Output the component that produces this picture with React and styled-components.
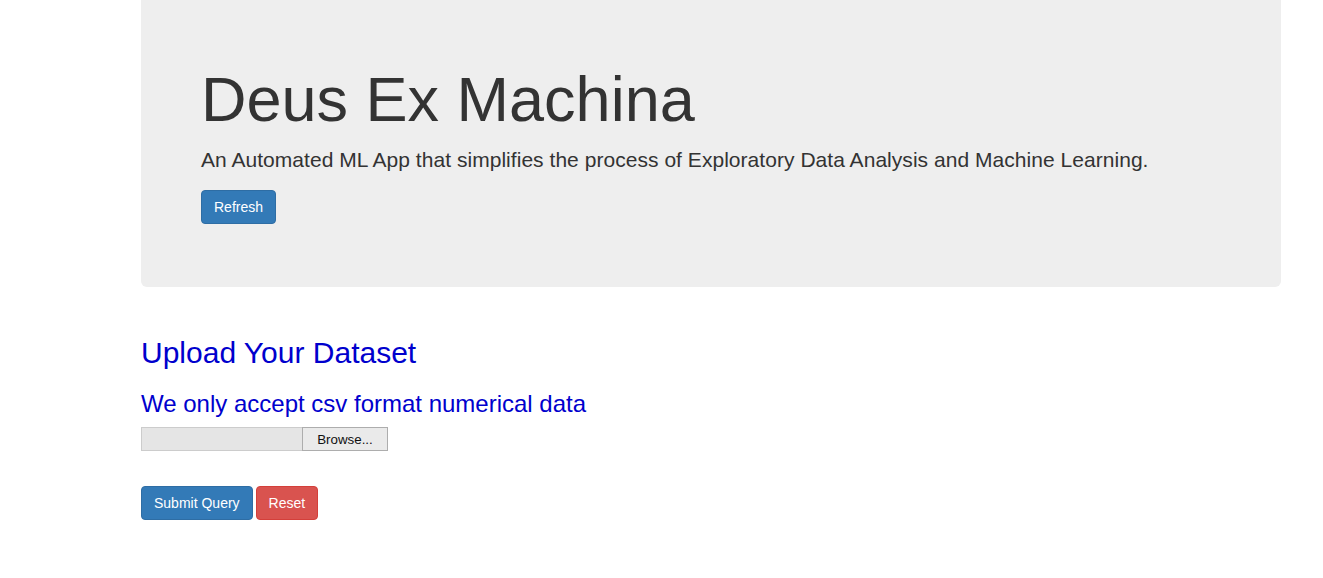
import styled, { createGlobalStyle } from "styled-components";

const Global = createGlobalStyle`
  html, body { margin: 0; padding: 0; background: #fff; }
  body {
    font-family: "Liberation Sans", Arial, sans-serif;
    font-size: 14px;
    line-height: 1.42857;
    color: #333;
  }
  * { box-sizing: border-box; }
`;

const Page = styled.div`
  width: 1140px;
  margin-left: 141px;
`;

const Jumbotron = styled.div`
  background: #eee;
  border-radius: 0 0 6px 6px;
  padding: 45px 60px 63px;
`;

const Title = styled.h1`
  font-size: 63px;
  font-weight: 500;
  line-height: 1.1;
  margin: 20px 0 11px;
  color: #333;
`;

const Lead = styled.p`
  font-size: 21px;
  font-weight: 200;
  letter-spacing: 0.04px;
  margin: 0 0 15px;
  line-height: 1.42857;
`;

const Btn = styled.button`
  display: inline-block;
  font-family: inherit;
  font-size: 14px;
  line-height: 1.42857;
  padding: 7px 12px 5px;
  border-radius: 4px;
  border: 1px solid ${p => (p.$danger ? "#d43f3a" : "#2e6da4")};
  background: ${p => (p.$danger ? "#d9534f" : "#337ab7")};
  color: #fff;
  cursor: pointer;
`;

const Section = styled.div`
  padding-top: 49px;
`;

const Heading = styled.h2`
  font-size: 30px;
  font-weight: 500;
  line-height: 1.1;
  color: #0000cd;
  margin: 0 0 22px;
`;

const SubHeading = styled.h3`
  font-size: 24px;
  font-weight: 500;
  line-height: 1.1;
  color: #0000cd;
  margin: 0 0 9px;
`;

const FileRow = styled.div`
  display: flex;
  height: 24px;
  width: 247px;
`;

const FileField = styled.div`
  width: 161px;
  background: #e5e5e5;
  border: 1px solid #ccc;
  border-right: none;
`;

const Browse = styled.div`
  flex: 1;
  display: flex;
  align-items: center;
  justify-content: center;
  padding-top: 1px;
  background: #eaeaea;
  border: 1px solid #adadad;
  font-size: 13.33px;
  color: #111;
`;

const Actions = styled.div`
  display: flex;
  gap: 3px;
  margin-top: 35px;
`;

export default function App() {
  return (
    <>
      <Global />
      <Page>
        <Jumbotron>
          <Title>Deus Ex Machina</Title>
          <Lead>An Automated ML App that simplifies the process of Exploratory Data Analysis and Machine Learning.</Lead>
          <Btn>Refresh</Btn>
        </Jumbotron>
        <Section>
          <Heading>Upload Your Dataset</Heading>
          <SubHeading>We only accept csv format numerical data</SubHeading>
          <FileRow>
            <FileField />
            <Browse>Browse...</Browse>
          </FileRow>
          <Actions>
            <Btn>Submit Query</Btn>
            <Btn $danger>Reset</Btn>
          </Actions>
        </Section>
      </Page>
    </>
  );
}
